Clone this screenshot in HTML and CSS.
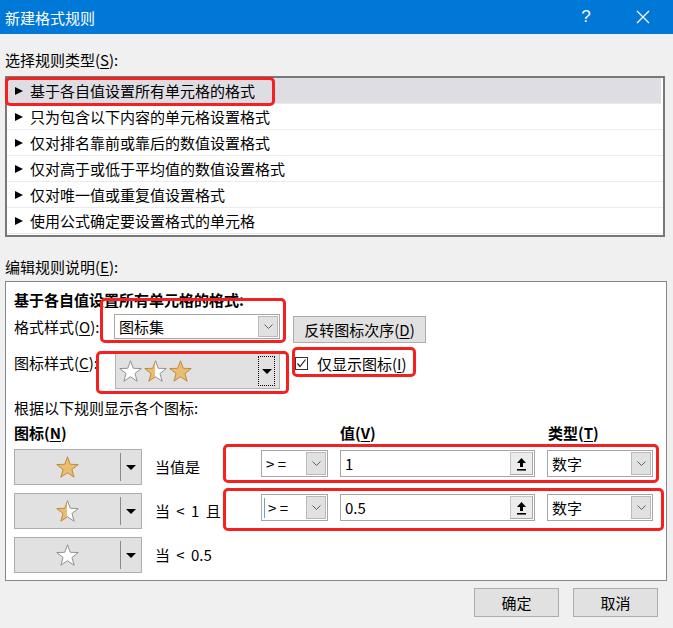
FILE: index.html
```html
<!DOCTYPE html>
<html lang="zh-CN">
<head>
    <meta charset="UTF-8">
    <title>新建格式规则</title>
    <link rel="stylesheet" href="styles.css">
</head>
<body>
    <svg class="defs" width="0" height="0">
        <defs>
            <linearGradient id="halfFill" x1="0" y1="0" x2="1" y2="0">
                <stop offset="0.5" stop-color="#e9bd72"/>
                <stop offset="0.5" stop-color="#ffffff"/>
            </linearGradient>
            <linearGradient id="halfStroke" x1="0" y1="0" x2="1" y2="0">
                <stop offset="0.5" stop-color="#b98a3e"/>
                <stop offset="0.5" stop-color="#8c8c8c"/>
            </linearGradient>
            <polygon id="star" points="12,0.8 14.88,8.64 23.22,8.95 16.66,14.11 18.94,22.15 12,17.5 5.06,22.15 7.34,14.11 0.78,8.95 9.12,8.64"/>
        </defs>
    </svg>

    <div class="titlebar">
        <span class="title">新建格式规则</span>
        <span class="help">?</span>
        <svg class="close" width="14" height="14" viewBox="0 0 14 14">
            <path d="M1 1 L13 13 M13 1 L1 13" stroke="#fff" stroke-width="1.2"/>
        </svg>
    </div>

    <div class="label">选择规则类型(<u>S</u>):</div>
    <ul class="rule-types">
        <li class="selected"><span class="tri"></span>基于各自值设置所有单元格的格式</li>
        <li><span class="tri"></span>只为包含以下内容的单元格设置格式</li>
        <li><span class="tri"></span>仅对排名靠前或靠后的数值设置格式</li>
        <li><span class="tri"></span>仅对高于或低于平均值的数值设置格式</li>
        <li><span class="tri"></span>仅对唯一值或重复值设置格式</li>
        <li><span class="tri"></span>使用公式确定要设置格式的单元格</li>
    </ul>

    <div class="label label-edit">编辑规则说明(<u>E</u>):</div>
    <div class="panel">
        <div class="panel-title">基于各自值设置所有单元格的格式:</div>

        <div class="form-row">
            <span class="form-label">格式样式(<u>O</u>):</span>
            <div class="combo format-combo">
                <span class="combo-text">图标集</span>
                <span class="drop"><svg width="9" height="5" viewBox="0 0 9 5"><polyline points="0.5,0.5 4.5,4.5 8.5,0.5" fill="none" stroke="#606060"/></svg></span>
            </div>
            <button class="btn reverse">反转图标次序(<u>D</u>)</button>
        </div>

        <div class="form-row icon-row">
            <span class="form-label">图标样式(<u>C</u>):</span>
            <div class="icon-combo">
                <svg class="star" viewBox="0 0 24 24"><use href="#star" fill="#fff" stroke="#8c8c8c"/></svg>
                <svg class="star" viewBox="0 0 24 24"><use href="#star" fill="url(#halfFill)" stroke="url(#halfStroke)"/></svg>
                <svg class="star" viewBox="0 0 24 24"><use href="#star" fill="#e9bd72" stroke="#b98a3e"/></svg>
                <span class="focus-drop"><span class="caret"></span></span>
            </div>
            <div class="check">
                <span class="checkbox"><svg width="11" height="11" viewBox="0 0 11 11"><polyline points="1.5,5.5 4,8.5 9.5,1.5" fill="none" stroke="#222" stroke-width="1.2"/></svg></span>
                仅显示图标(<u>I</u>)
            </div>
        </div>

        <div class="hint">根据以下规则显示各个图标:</div>
        <div class="headers">
            <span class="h-icon">图标(<u>N</u>)</span>
            <span class="h-value">值(<u>V</u>)</span>
            <span class="h-type">类型(<u>T</u>)</span>
        </div>

        <div class="rule">
            <div class="pick">
                <span class="pick-star"><svg class="star" viewBox="0 0 24 24"><use href="#star" fill="#e9bd72" stroke="#b98a3e"/></svg></span>
                <span class="pick-arrow"><span class="caret"></span></span>
            </div>
            <span class="cond">当值是</span>
            <div class="combo op"><span class="combo-text">&gt; =</span><span class="drop"><svg width="9" height="5" viewBox="0 0 9 5"><polyline points="0.5,0.5 4.5,4.5 8.5,0.5" fill="none" stroke="#606060"/></svg></span></div>
            <div class="combo val"><span class="combo-text">1</span><span class="spin"><svg width="11" height="14" viewBox="0 0 11 14"><path d="M5.5 1 L10 6 H7 V10 H4 V6 H1 Z" fill="#000"/><rect x="1" y="12" width="9" height="1.6" fill="#000"/></svg></span></div>
            <div class="combo type"><span class="combo-text">数字</span><span class="drop"><svg width="9" height="5" viewBox="0 0 9 5"><polyline points="0.5,0.5 4.5,4.5 8.5,0.5" fill="none" stroke="#606060"/></svg></span></div>
        </div>

        <div class="rule">
            <div class="pick">
                <span class="pick-star"><svg class="star" viewBox="0 0 24 24"><use href="#star" fill="url(#halfFill)" stroke="url(#halfStroke)"/></svg></span>
                <span class="pick-arrow"><span class="caret"></span></span>
            </div>
            <span class="cond">当 &lt; 1 且</span>
            <div class="combo op"><span class="combo-text"><span class="cursor"></span>&gt; =</span><span class="drop"><svg width="9" height="5" viewBox="0 0 9 5"><polyline points="0.5,0.5 4.5,4.5 8.5,0.5" fill="none" stroke="#606060"/></svg></span></div>
            <div class="combo val"><span class="combo-text">0.5</span><span class="spin"><svg width="11" height="14" viewBox="0 0 11 14"><path d="M5.5 1 L10 6 H7 V10 H4 V6 H1 Z" fill="#000"/><rect x="1" y="12" width="9" height="1.6" fill="#000"/></svg></span></div>
            <div class="combo type"><span class="combo-text">数字</span><span class="drop"><svg width="9" height="5" viewBox="0 0 9 5"><polyline points="0.5,0.5 4.5,4.5 8.5,0.5" fill="none" stroke="#606060"/></svg></span></div>
        </div>

        <div class="rule">
            <div class="pick">
                <span class="pick-star"><svg class="star" viewBox="0 0 24 24"><use href="#star" fill="#fff" stroke="#8c8c8c"/></svg></span>
                <span class="pick-arrow"><span class="caret"></span></span>
            </div>
            <span class="cond">当 &lt; 0.5</span>
        </div>
    </div>

    <div class="footer">
        <button class="btn">确定</button>
        <button class="btn">取消</button>
    </div>

    <!-- red annotation boxes drawn over the dialog -->
    <div class="mark mark-type"></div>
    <div class="mark mark-format"></div>
    <div class="mark mark-icons"></div>
    <div class="mark mark-check"></div>
    <div class="mark mark-rule1"></div>
    <div class="mark mark-rule2"></div>
</body>
</html>
```

FILE: styles.css
```css
body {
    margin: 0;
    width: 673px;
    height: 628px;
    position: relative;
    overflow: hidden;
    background: #f0f0f0;
    color: #000;
    font-family: "Noto Sans CJK SC", "Microsoft YaHei", sans-serif;
    font-size: 15px;
}

.defs {
    position: absolute;
}

u {
    text-decoration: underline;
    text-underline-offset: 2px;
}

/* title bar */
.titlebar {
    height: 34px;
    background: #0078d7;
    color: #fff;
    display: flex;
    align-items: center;
    padding: 0 23px 0 5px;
}

.title {
    flex: 1;
}

.help {
    width: 20px;
    margin-right: 40px;
    text-align: center;
    font-family: "Liberation Sans", sans-serif;
    font-size: 17px;
    font-weight: 300;
}

/* section labels */
.label {
    height: 20px;
    line-height: 20px;
    margin: 16px 5px 6px;
}

.label-edit {
    margin: 20px 5px 4px;
}

/* rule type list */
.rule-types {
    list-style: none;
    margin: 0 8px 0 5px;
    padding: 0 0 1px;
    border: 2px solid #787878;
    background: #fff;
}

.rule-types li {
    height: 25px;
    line-height: 25px;
    border-bottom: 1px solid #ebebeb;
    display: flex;
    align-items: center;
}

.rule-types li.selected {
    background: #dedde3;
    margin-right: 2px;
}

.tri {
    width: 0;
    height: 0;
    border-left: 8px solid #000;
    border-top: 4px solid transparent;
    border-bottom: 4px solid transparent;
    margin: 0 7px 0 8px;
}

/* description panel */
.panel {
    margin: 0 6px 0 5px;
    border: 1px solid #828790;
    background: #fff;
    padding: 8px 0 7px 8px;
}

.panel-title {
    height: 20px;
    line-height: 20px;
    font-weight: bold;
}

.form-row {
    display: flex;
    align-items: flex-start;
    margin-top: 4px;
}

.icon-row {
    margin-top: 10px;
}

.form-label {
    width: 100px;
    line-height: 25px;
}

.icon-row .form-label {
    line-height: 20px;
}

.combo {
    display: flex;
    align-items: center;
    box-sizing: border-box;
    border: 1px solid #a6a6a6;
    background: #fff;
}

.combo-text {
    flex: 1;
    padding-left: 4px;
    display: flex;
    align-items: center;
}

.drop {
    box-sizing: border-box;
    width: 20px;
    height: calc(100% - 2px);
    margin-right: 1px;
    background: #e1e1e1;
    border: 1px solid #b9b9b9;
    display: flex;
    align-items: center;
    justify-content: center;
}

.format-combo {
    width: 166px;
    height: 25px;
}

.btn {
    box-sizing: border-box;
    background: #e1e1e1;
    border: 1px solid #adadad;
    font-family: inherit;
    font-size: 15px;
    color: #000;
    padding: 0;
}

.reverse {
    width: 133px;
    height: 27px;
    margin: 2px 0 0 13px;
}

.icon-combo {
    box-sizing: border-box;
    width: 165px;
    height: 36px;
    margin-left: 1px;
    background: #e1e1e1;
    border: 1px solid #b4b4b4;
    display: flex;
    align-items: center;
    padding-left: 3px;
    gap: 2px;
}

.star {
    width: 23px;
    height: 23px;
    display: block;
    overflow: visible;
}

.focus-drop {
    box-sizing: border-box;
    width: 17px;
    height: 30px;
    margin-left: auto;
    margin-right: 4px;
    border: 1px dotted #000;
    display: flex;
    align-items: center;
    justify-content: center;
}

.caret {
    width: 0;
    height: 0;
    border-top: 5px solid #000;
    border-left: 5px solid transparent;
    border-right: 5px solid transparent;
}

.check {
    display: flex;
    align-items: center;
    height: 20px;
    margin-left: 15px;
}

.checkbox {
    box-sizing: border-box;
    width: 13px;
    height: 13px;
    border: 1px solid #333;
    margin-right: 9px;
    display: flex;
    align-items: center;
    justify-content: center;
}

.hint {
    height: 20px;
    line-height: 20px;
    margin-top: 9px;
}

.headers {
    display: flex;
    height: 20px;
    line-height: 20px;
    margin-top: 5px;
    font-weight: bold;
}

.h-icon {
    width: 326px;
}

.h-value {
    width: 208px;
}

/* icon rules */
.rule {
    display: flex;
    align-items: flex-start;
    height: 36px;
    margin-top: 8px;
}

.headers + .rule {
    margin-top: 6px;
}

.pick {
    box-sizing: border-box;
    width: 128px;
    height: 36px;
    background: #e1e1e1;
    border: 1px solid #adadad;
    display: flex;
    align-items: center;
}

.pick-star {
    width: 105px;
    height: 28px;
    border-right: 1px solid #8a8a8a;
    display: flex;
    align-items: center;
    justify-content: center;
}

.pick-arrow {
    flex: 1;
    display: flex;
    justify-content: center;
}

.cond {
    width: 106px;
    padding-left: 13px;
    line-height: 36px;
    word-spacing: 3px;
}

.rule .combo {
    height: 27px;
    margin-top: 1px;
}

.op {
    width: 67px;
}

.val {
    width: 195px;
    margin-left: 12px;
}

.type {
    width: 106px;
    margin-left: 12px;
}

.cursor {
    width: 1px;
    height: 20px;
    background: #6aa0e0;
    margin: 0 3px 0 -2px;
}

.spin {
    box-sizing: border-box;
    width: 23px;
    height: calc(100% - 2px);
    margin-right: 1px;
    background: #ececec;
    border: 1px solid #c4c4c4;
    border-right-color: #a8a8a8;
    border-bottom-color: #a8a8a8;
    display: flex;
    align-items: center;
    justify-content: center;
}

/* bottom buttons */
.footer {
    display: flex;
    justify-content: flex-end;
    gap: 14px;
    padding-right: 15px;
    margin-top: 7px;
}

.footer .btn {
    width: 85px;
    height: 29px;
}

/* red highlight marks */
.mark {
    position: absolute;
    box-sizing: border-box;
    border: 3px solid #f52020;
    border-radius: 5px;
}

.mark-type {
    left: 5px;
    top: 77px;
    width: 270px;
    height: 29px;
}

.mark-format {
    left: 100px;
    top: 298px;
    width: 186px;
    height: 45px;
}

.mark-icons {
    left: 96px;
    top: 351px;
    width: 193px;
    height: 43px;
}

.mark-check {
    left: 292px;
    top: 347px;
    width: 124px;
    height: 30px;
}

.mark-rule1 {
    left: 223px;
    top: 444px;
    width: 436px;
    height: 39px;
}

.mark-rule2 {
    left: 223px;
    top: 488px;
    width: 441px;
    height: 43px;
}
```
